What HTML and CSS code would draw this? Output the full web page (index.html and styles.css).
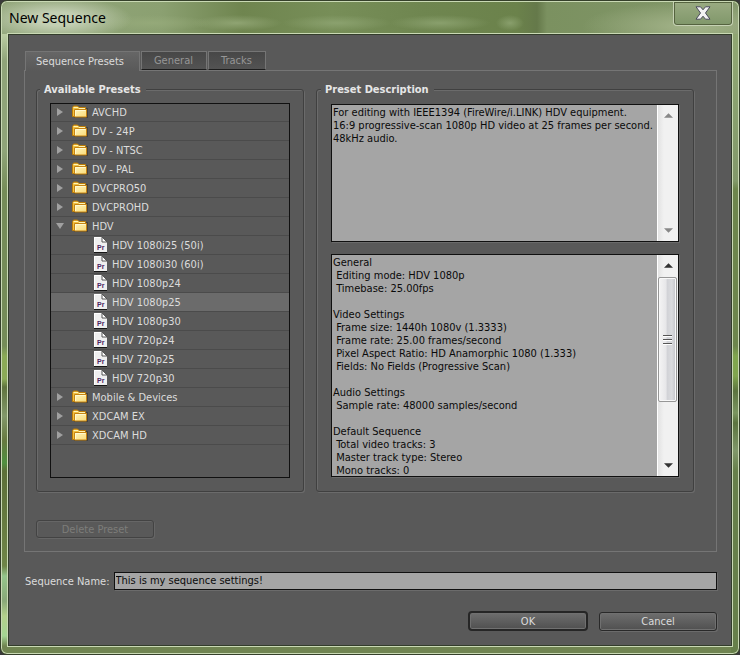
FILE: index.html
```html
<!DOCTYPE html>
<html lang="en">
<head>
<meta charset="utf-8">
<title>New Sequence</title>
<link rel="stylesheet" href="styles.css">
</head>
<body>
<svg class="defs" aria-hidden="true">
  <defs>
    <linearGradient id="gold" x1="0" y1="0" x2="1" y2="1"><stop offset="0" stop-color="#fff6bd"/><stop offset="1" stop-color="#fadb78"/></linearGradient>
    <symbol id="folder" viewBox="0 0 16 14">
      <path d="M2 12V3h14v10H2z" fill="#37342e" opacity=".6"/>
      <path d="M.5 11.500V3l1-2h4l1.500 1.500h6.500v9z" fill="#f3c13f" stroke="#bd7d08"/>
      <path d="M1.500 2.500h4.500l1 1h6" fill="none" stroke="#fff5b5"/>
      <path d="M2.500 4.500h12v7.500h-12z" fill="url(#gold)" stroke="#c68412"/>
      <path d="M3.500 11V5.500h10" fill="none" stroke="#fffad0"/>
    </symbol>
    <symbol id="file" viewBox="0 0 13 16">
      <path d="M0 0h8l5 5v11H0z" fill="#efefef"/>
      <path d="M.5 15V.5H8" fill="none" stroke="#fff"/>
      <path d="M8 0v5h5z" fill="#fff" stroke="#555"/>
      <path d="M0 15h13v1H0z" fill="#161616"/>
      <text x="3" y="13" class="pr">Pr</text>
    </symbol>
    <symbol id="closed" viewBox="0 0 7 8"><path d="M.5 0L6.500 4 .5 8z" fill="#a0a0a0"/></symbol>
    <symbol id="open" viewBox="0 0 8 7"><path d="M0 .5h8L4 6.500z" fill="#a0a0a0"/></symbol>
    <symbol id="up" viewBox="0 0 10 5"><path d="M5 0l5 5H0z" fill="currentColor"/></symbol>
    <symbol id="down" viewBox="0 0 10 5"><path d="M0 0h10L5 5z" fill="currentColor"/></symbol>
  </defs>
</svg>
<main class="window">
  <header class="titlebar">
    <h1>New Sequence</h1>
    <button class="close" aria-label="Close"><svg width="16" height="14" viewBox="0 0 16 14"><path d="M1 .8h4.500L8 3.800 10.500.8H15L10.500 7l4.500 6.200h-4.500L8 10.200l-2.500 3H1L5.500 7z" fill="#f3f3f3" stroke="#4a4a5c"/></svg></button>
  </header>
  <div class="client">
    <nav class="tabs" role="tablist">
      <button class="tab active" role="tab" aria-selected="true">Sequence Presets</button>
      <button class="tab" role="tab">General</button>
      <button class="tab" role="tab">Tracks</button>
    </nav>
    <div class="panel">
      <div class="groups">
        <section class="group presets">
          <h2>Available Presets</h2>
          <div class="listbox">
            <ul class="tree">
              <li><svg class="arrow"><use href="#closed"/></svg><svg class="folder"><use href="#folder"/></svg>AVCHD</li>
              <li><svg class="arrow"><use href="#closed"/></svg><svg class="folder"><use href="#folder"/></svg>DV - 24P</li>
              <li><svg class="arrow"><use href="#closed"/></svg><svg class="folder"><use href="#folder"/></svg>DV - NTSC</li>
              <li><svg class="arrow"><use href="#closed"/></svg><svg class="folder"><use href="#folder"/></svg>DV - PAL</li>
              <li><svg class="arrow"><use href="#closed"/></svg><svg class="folder"><use href="#folder"/></svg>DVCPRO50</li>
              <li><svg class="arrow"><use href="#closed"/></svg><svg class="folder"><use href="#folder"/></svg>DVCPROHD</li>
              <li><svg class="arrow"><use href="#open"/></svg><svg class="folder"><use href="#folder"/></svg>HDV</li>
              <li class="child"><svg class="file"><use href="#file"/></svg>HDV 1080i25 (50i)</li>
              <li class="child"><svg class="file"><use href="#file"/></svg>HDV 1080i30 (60i)</li>
              <li class="child"><svg class="file"><use href="#file"/></svg>HDV 1080p24</li>
              <li class="child selected"><svg class="file"><use href="#file"/></svg>HDV 1080p25</li>
              <li class="child"><svg class="file"><use href="#file"/></svg>HDV 1080p30</li>
              <li class="child"><svg class="file"><use href="#file"/></svg>HDV 720p24</li>
              <li class="child"><svg class="file"><use href="#file"/></svg>HDV 720p25</li>
              <li class="child"><svg class="file"><use href="#file"/></svg>HDV 720p30</li>
              <li><svg class="arrow"><use href="#closed"/></svg><svg class="folder"><use href="#folder"/></svg>Mobile &amp; Devices</li>
              <li><svg class="arrow"><use href="#closed"/></svg><svg class="folder"><use href="#folder"/></svg>XDCAM EX</li>
              <li><svg class="arrow"><use href="#closed"/></svg><svg class="folder"><use href="#folder"/></svg>XDCAM HD</li>
            </ul>
          </div>
        </section>
        <section class="group">
          <h2>Preset Description</h2>
          <div class="textbox short">
            <textarea readonly aria-label="Preset description">For editing with IEEE1394 (FireWire/i.LINK) HDV equipment.
16:9 progressive-scan 1080p HD video at 25 frames per second.
48kHz audio.</textarea>
            <div class="scroll idle"><svg class="tip"><use href="#up"/></svg><svg class="tip"><use href="#down"/></svg></div>
          </div>
          <div class="textbox long">
            <textarea readonly aria-label="Preset settings">General
 Editing mode: HDV 1080p
 Timebase: 25.00fps

Video Settings
 Frame size: 1440h 1080v (1.3333)
 Frame rate: 25.00 frames/second
 Pixel Aspect Ratio: HD Anamorphic 1080 (1.333)
 Fields: No Fields (Progressive Scan)

Audio Settings
 Sample rate: 48000 samples/second

Default Sequence
 Total video tracks: 3
 Master track type: Stereo
 Mono tracks: 0</textarea>
            <div class="scroll"><svg class="tip"><use href="#up"/></svg><div class="track"><div class="thumb"><i></i><i></i><i></i></div></div><svg class="tip"><use href="#down"/></svg></div>
          </div>
        </section>
      </div>
      <button class="btn delete" disabled>Delete Preset</button>
    </div>
    <div class="name">
      <label for="seq">Sequence Name:</label>
      <input id="seq" type="text" value="This is my sequence settings!">
    </div>
    <footer class="actions">
      <button class="btn ok">OK</button>
      <button class="btn">Cancel</button>
    </footer>
  </div>
</main>
</body>
</html>
```
FILE: styles.css
```css
* { box-sizing: border-box; }
body {
  margin: 0;
  background: #3a3a3a;
  font: 11px/13px "DejaVu Sans Condensed", "Noto Sans", sans-serif;
  color: #dcdcdc;
}
button, input, textarea { font: inherit; color: inherit; }
.defs { position: absolute; width: 0; height: 0; }
.pr { font: bold 7px "Liberation Sans", sans-serif; fill: #4b2561; }

.window {
  min-height: 100vh;
  display: flex;
  flex-direction: column;
  padding: 0 7px 8px;
  border: 1px solid #35402a;
  border-radius: 7px;
  box-shadow: inset 0 0 0 1px #c9d9b4;
  background:
    linear-gradient(#8fa572 0, #8fa572 60px, #82996a 180px, #6d864c 188px, #6d864c 345px, #80a54e 355px, #80a54e 375px, #5c743f 390px, #7b9560 412px, #5c743f 422px, #80986a 450px, #67804a 470px) right / 8px 100% no-repeat,
    linear-gradient(#93a77c 0, #c0d2a8 30px, #8fa478 60px, #8fa478 150px, #758c58 190px, #758c58 345px, #8bab57 355px, #8bab57 378px, #5f743e 386px, #82986a 415px, #66793f 440px, #4f9040 462px, #5c7038 470px, #6f8548 565px, #94c58b 575px, #8aa878 600px, #b3d08b 615px, #a4d593 635px, #708451 645px) left / 8px 100% no-repeat,
    #708451;
}
.titlebar {
  height: 32px;
  display: flex;
  align-items: flex-start;
  justify-content: space-between;
  margin: 1px -6px 0;
  padding-left: 7px;
  border-radius: 6px 6px 0 0;
  background:
    radial-gradient(ellipse 75px 22px at 55px 17px, #c3cfb3 30%, #c3cfb300 100%),
    radial-gradient(ellipse 60px 8px at 150px 21px, #97ab7bcc, #97ab7b00),
    radial-gradient(ellipse 45px 8px at 235px 21px, #97ab7bcc, #97ab7b00),
    radial-gradient(ellipse 55px 8px at 335px 21px, #90a674cc, #90a67400),
    radial-gradient(ellipse 50px 8px at 438px 21px, #90a674cc, #90a67400),
    radial-gradient(ellipse 14px 8px at 508px 21px, #90a674cc, #90a67400),
    radial-gradient(ellipse 110px 24px at 690px 24px, #a4b48a, #a4b48a00),
    linear-gradient(90deg, #93a77c 0, #8ba071 160px, #6f854f 240px, #778e58 330px, #6f8650 420px, #6b824b 515px, #65794a 535px, #7b9160 545px, #82976a 100%);
}
h1 {
  margin: 5px 0 0;
  font: 14px/22px "Noto Sans", "Open Sans", sans-serif;
  color: #000;
}
.close {
  width: 60px;
  height: 24px;
  margin-right: 5px;
  padding: 0 0 2px;
  border: 1px solid #c6d2b4;
  border-top: 0;
  border-radius: 0 0 4px 4px;
  background: linear-gradient(#9aab82, #80976a);
  box-shadow: inset 0 0 0 1px #55633f;
}
.close svg { display: block; margin: auto; }

.client {
  flex: 1;
  display: flex;
  flex-direction: column;
  padding: 16px 14px 14px 15px;
  border: 1px solid #333d2b;
  outline: 1px solid #c9d9b4;
  background: #595959;
}
.tabs { display: flex; gap: 1px; margin-left: 1px; position: relative; z-index: 1; }
.tab {
  height: 19px;
  padding: 0 13px 0 12px;
  border: 1px solid #757575;
  border-bottom-color: #1d1d1d;
  background: linear-gradient(#474747, #535353);
  color: #969696;
}
.tab.active {
  height: 20px;
  margin-bottom: -1px;
  padding: 0 15px 0 10px;
  border-bottom: 0;
  background: linear-gradient(#666, #595959);
  color: #dcdcdc;
}
.panel {
  flex: 1;
  display: flex;
  flex-direction: column;
  align-items: flex-start;
  padding: 18px 22px 13px 11px;
  border: 1px solid #757575;
}
.groups {
  flex: 1;
  align-self: stretch;
  display: grid;
  grid-template-columns: 268fr 378fr;
  gap: 12px;
}
.group {
  display: flex;
  flex-direction: column;
  padding: 0 14px 14px;
  border: 1px solid #404040;
  border-radius: 3px;
  box-shadow: 1px 1px 0 #6b6b6b, inset 1px 1px 0 #6b6b6b;
  min-width: 0;
}
.presets { padding: 0 13px 13px; }
h2 {
  align-self: flex-start;
  margin: -8px 0 7px -10px;
  padding: 0 5px 0 4px;
  background: #595959;
  font: bold 11px/15px "DejaVu Sans Condensed", "Noto Sans", sans-serif;
  color: #e6e6e6;
}
.listbox { flex: 1; border: 1px solid #101010; overflow: hidden; margin-top: -1px; }
.tree { list-style: none; margin: -1px 0 0; padding: 0; }
.tree li {
  height: 19px;
  display: flex;
  align-items: center;
  padding-left: 5px;
  border-bottom: 1px solid #4b4b4b;
}
.tree .child { padding-left: 43px; }
.tree .selected { background: #6b6b6b; }
.arrow { width: 8px; height: 8px; margin-right: 8px; }
.folder { width: 16px; height: 14px; margin-right: 4px; }
.file { width: 13px; height: 16px; margin-right: 5px; }

.textbox {
  display: flex;
  min-height: 0;
  border: 1px solid #101010;
  box-shadow: 1px 1px 0 #6b6b6b;
  background: #a5a5a5;
}
.short { flex: 138 1 0; margin-bottom: 12px; }
.long { flex: 223 1 0; }
textarea {
  flex: 1;
  min-width: 0;
  margin: 0;
  padding: 1px;
  border: 0;
  background: none;
  color: #0a0a0a;
  resize: none;
  overflow: hidden;
  white-space: pre;
}
.scroll {
  width: 21px;
  display: flex;
  flex-direction: column;
  align-items: center;
  justify-content: space-between;
  padding: 8px 0;
  border-left: 1px solid #fff;
  background: linear-gradient(90deg, #e3e3e3, #f1f1f1 30%);
  color: #333;
}
.idle { color: #888; }
.tip { width: 9px; height: 5px; flex: none; }
.track { flex: 1; align-self: stretch; padding: 9px 1px 0 0; }
.thumb {
  height: 67%;
  display: flex;
  flex-direction: column;
  align-items: center;
  justify-content: center;
  gap: 2px;
  border: 1px solid #979797;
  border-radius: 2px;
  box-shadow: inset 0 0 0 1px #f8f8f8;
  background: linear-gradient(90deg, #f4f4f4 0, #e7e7e9 40%, #d2d3d7 50%, #dadbde 75%, #c3c4c9);
}
.thumb i { width: 9px; height: 2px; border-top: 1px solid #555; background: #fff; }

.btn {
  width: 118px;
  height: 19px;
  padding: 0;
  border: 1px solid #292929;
  border-radius: 3px;
  background: linear-gradient(#6e6e6e, #505050);
  box-shadow: 1px 1px 0 #6b6b6b, inset 0 0 0 1px #707070;
}
.delete {
  height: 18px;
  margin-top: 28px;
  border-color: #434343;
  background: none;
  color: #7d7d7a;
  box-shadow: 1px 1px 0 #666, inset 1px 1px 0 #666;
}
.name { display: flex; align-items: center; gap: 4px; margin: 20px 0 0 1px; }
input {
  flex: 1;
  min-width: 0;
  height: 18px;
  padding: 0 1px 1px;
  border: 1px solid #101010;
  border-radius: 0;
  box-shadow: 1px 1px 0 #6b6b6b;
  background: #a5a5a5;
  color: #0a0a0a;
}
.actions { display: flex; align-items: center; justify-content: flex-end; gap: 11px; margin-top: 21px; }
.ok { width: 120px; height: 20px; border: 2px solid #262626; border-radius: 4px; box-shadow: inset 0 0 0 1px #707070; }
```
